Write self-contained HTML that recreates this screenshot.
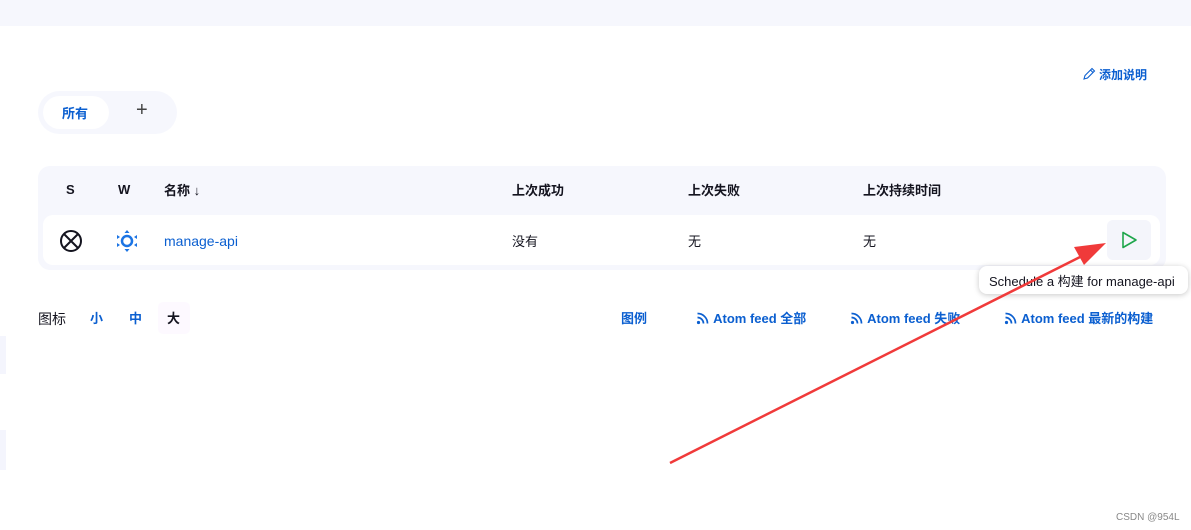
<!DOCTYPE html>
<html><head><meta charset="utf-8"><style>
*{margin:0;padding:0;box-sizing:border-box}
body{width:1191px;height:530px;background:#fff;position:relative;overflow:hidden;font-family:"Liberation Sans","Noto Sans CJK SC",sans-serif;font-size:13px;color:#14141f}
.a{position:absolute;white-space:nowrap}
.blue{color:#0b5fd0}
.b{font-weight:bold}
</style></head><body>
<div class="a" style="left:0;top:0;width:1191px;height:26px;background:#f6f7fd"></div>
<div class="a blue b" style="left:1082px;top:66px;font-size:12px"><svg width="14" height="14" viewBox="0 0 14 14" style="vertical-align:-2px;margin-right:3px"><path d="M2 12l1-3.5 7-7 2.5 2.5-7 7z M8.5 3l2.5 2.5" fill="none" stroke="#0b5fd0" stroke-width="1.1"/></svg>添加说明</div>
<div class="a" style="left:38px;top:91px;width:139px;height:43px;border-radius:22px;background:#f6f7fd"></div>
<div class="a" style="left:43px;top:96px;width:66px;height:33px;border-radius:17px;background:#fff"></div>
<div class="a blue b" style="left:62px;top:103px">所有</div>
<div class="a" style="left:136px;top:98px;font-size:20px;color:#444;line-height:24px">+</div>
<div class="a" style="left:38px;top:166px;width:1128px;height:104px;border-radius:12px;background:#f6f7fd"></div>
<div class="a" style="left:43px;top:215px;width:1117px;height:50px;border-radius:10px;background:#fff"></div>
<div class="a b" style="left:66px;top:182px">S</div>
<div class="a b" style="left:118px;top:182px">W</div>
<div class="a b" style="left:164px;top:180px">名称 ↓</div>
<div class="a b" style="left:512px;top:180px">上次成功</div>
<div class="a b" style="left:688px;top:180px">上次失败</div>
<div class="a b" style="left:863px;top:180px">上次持续时间</div>
<svg class="a" style="left:59px;top:229px" width="24" height="24" viewBox="0 0 24 24"><circle cx="12" cy="12" r="10" fill="none" stroke="#14141f" stroke-width="2"/><path d="M5 5l14 14M19 5L5 19" stroke="#14141f" stroke-width="2"/></svg>
<svg class="a" style="left:115px;top:229px" width="24" height="24" viewBox="0 0 24 24"><circle cx="12" cy="12" r="5" fill="none" stroke="#1b74e4" stroke-width="2.5"/><path d="M12 1l-2.5 3h5zM12 23l-2.5-3h5zM2 6v4l3-2zM22 6v4l-3-2zM2 14v4l3-2zM22 14v4l-3-2z" fill="#1b74e4"/></svg>
<div class="a blue" style="left:164px;top:233px;font-size:14px">manage-api</div>
<div class="a" style="left:512px;top:231px">没有</div>
<div class="a" style="left:688px;top:231px">无</div>
<div class="a" style="left:863px;top:231px">无</div>
<div class="a" style="left:1107px;top:220px;width:44px;height:40px;border-radius:6px;background:#f4f5fb"></div>
<svg class="a" style="left:1119px;top:230px" width="20" height="20" viewBox="0 0 20 20"><path d="M4 2.5v15l13-7.5z" fill="none" stroke="#1ea64b" stroke-width="1.6" stroke-linejoin="round"/></svg>
<div class="a" style="left:979px;top:266px;width:209px;height:28px;border-radius:8px;background:#fff;box-shadow:0 1px 6px rgba(0,0,0,.22)"></div>
<div class="a" style="left:989px;top:271px;font-size:13px">Schedule a 构建 for manage-api</div>
<div class="a" style="left:38px;top:309px;font-size:14px">图标</div>
<div class="a blue b" style="left:90px;top:308px">小</div>
<div class="a blue b" style="left:129px;top:308px">中</div>
<div class="a" style="left:158px;top:302px;width:32px;height:32px;border-radius:5px;background:#fdf9ff"></div>
<div class="a b" style="left:167px;top:308px">大</div>
<div class="a blue b" style="left:621px;top:308px">图例</div>
<div class="a blue b" style="left:696px;top:308px"><svg width="14" height="14" viewBox="0 0 14 14" style="vertical-align:-2px"><circle cx="2.5" cy="11.5" r="1.6" fill="#0b5fd0"/><path d="M1.5 6.5a6 6 0 0 1 6 6M1.5 2.5a10 10 0 0 1 10 10" fill="none" stroke="#0b5fd0" stroke-width="1.7"/></svg> Atom feed 全部</div>
<div class="a blue b" style="left:850px;top:308px"><svg width="14" height="14" viewBox="0 0 14 14" style="vertical-align:-2px"><circle cx="2.5" cy="11.5" r="1.6" fill="#0b5fd0"/><path d="M1.5 6.5a6 6 0 0 1 6 6M1.5 2.5a10 10 0 0 1 10 10" fill="none" stroke="#0b5fd0" stroke-width="1.7"/></svg> Atom feed 失败</div>
<div class="a blue b" style="left:1004px;top:308px"><svg width="14" height="14" viewBox="0 0 14 14" style="vertical-align:-2px"><circle cx="2.5" cy="11.5" r="1.6" fill="#0b5fd0"/><path d="M1.5 6.5a6 6 0 0 1 6 6M1.5 2.5a10 10 0 0 1 10 10" fill="none" stroke="#0b5fd0" stroke-width="1.7"/></svg> Atom feed 最新的构建</div>
<div class="a" style="left:0;top:336px;width:6px;height:38px;background:#f4f5fd"></div>
<div class="a" style="left:0;top:430px;width:6px;height:40px;background:#f4f5fd"></div>
<svg class="a" style="left:0;top:0" width="1191" height="530"><line x1="670" y1="463" x2="1090" y2="252" stroke="#f03a3a" stroke-width="2.5"/><path d="M1106 243l-32 4 10 18z" fill="#f03a3a"/></svg>
<div class="a" style="left:1116px;top:512px;font-size:10px;color:#888">CSDN @954L</div>
</body></html>
